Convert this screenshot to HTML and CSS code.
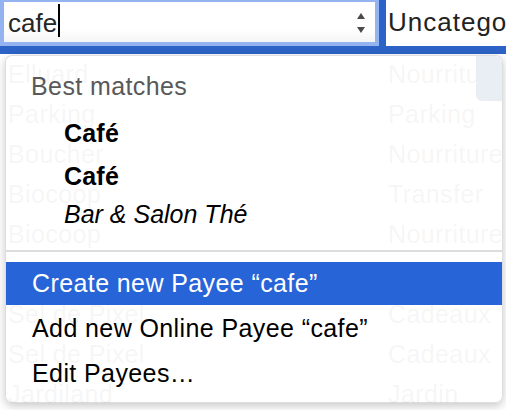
FILE: index.html
```html
<!DOCTYPE html>
<html lang="fr">
<head>
  <meta charset="UTF-8" />
  <meta name="viewport" content="width=device-width, initial-scale=1.0" />
  <title>Payee</title>
  <link rel="stylesheet" href="styles.css">
</head>
<body>
  <div class="table">
    <div class="row row-selected">
      <div class="search-field">
        <span class="search-text">cafe</span><span class="caret"></span>
        <svg class="stepper" width="10" height="22" viewBox="0 0 10 22">
          <polygon points="1,7 9,7 5,1" />
          <polygon points="1,15 9,15 5,21" />
        </svg>
      </div>
      <div class="category-field">Uncategorized</div>
    </div>
    <div class="row"><span class="name">Elluard</span><span class="category">Nourriture</span></div>
    <div class="row"><span class="name">Parking</span><span class="category">Parking</span></div>
    <div class="row"><span class="name">Boucher</span><span class="category">Nourriture</span></div>
    <div class="row"><span class="name">Biocoop</span><span class="category">Transfer</span></div>
    <div class="row"><span class="name">Biocoop</span><span class="category">Nourriture</span></div>
    <div class="row"><span class="name">Sel de Pixel</span><span class="category">Cadeaux</span></div>
    <div class="row"><span class="name">Sel de Pixel</span><span class="category">Cadeaux</span></div>
    <div class="row"><span class="name">Sel de Pixel</span><span class="category">Cadeaux</span></div>
    <div class="row"><span class="name">Jardiland</span><span class="category">Jardin</span></div>
  </div>

  <div class="menu">
    <div class="menu-tab"></div>
    <div class="menu-head">Best matches</div>
    <div class="menu-item match">Café</div>
    <div class="menu-item match">Café</div>
    <div class="menu-item match match-alt">Bar &amp; Salon Thé</div>
    <div class="menu-sep"></div>
    <div class="menu-item active">Create new Payee “cafe”</div>
    <div class="menu-item">Add new Online Payee “cafe”</div>
    <div class="menu-item">Edit Payees…</div>
  </div>
</body>
</html>
```

FILE: styles.css
```css
* { box-sizing: border-box; }
body {
  margin: 0;
  width: 506px; height: 410px;
  overflow: hidden;
  position: relative;
  background: #fff;
  font-family: 'Liberation Sans', Arial, sans-serif;
  font-size: 25px;
  letter-spacing: 0.4px;
  white-space: nowrap;
}

.table { width: 100%; }
.row {
  display: grid;
  grid-template-columns: 386px 1fr;
  height: 40px; line-height: 40px;
  color: #333;
  overflow: hidden;
}
.row .name { padding-left: 8px; overflow: hidden; }
.row .category { padding-left: 2px; overflow: hidden; }

.row-selected {
  display: flex; gap: 7px;
  height: 54px;
  background: #2d63c6;
}
.search-field {
  display: flex; align-items: flex-start;
  width: 379px; height: 48px;
  margin-top: -2px;
  border: 4px solid #93b4f0;
  background: linear-gradient(#fff, #fff 70%, #f4f4f4);
  color: #262626;
}
.search-text {
  font-size: 26px; letter-spacing: 0;
  line-height: 40px; padding-top: 1px; padding-left: 4px;
}
.caret {
  width: 2px; height: 33px;
  margin-top: 2px; margin-left: 1px;
  background: #000;
}
.stepper {
  margin-left: auto; margin-right: 9px; margin-top: 10px;
  fill: #4a4a4a;
}
.category-field {
  flex: 1; height: 46px;
  background: #fff;
  padding-left: 2px;
  font-size: 26px; letter-spacing: 1px;
  line-height: 44px;
  color: #222;
  overflow: hidden;
}

.menu {
  position: absolute; left: 5px; top: 55px;
  width: 498px;
  padding: 9px 0 7px;
  background: rgba(255, 255, 255, 0.955);
  border: 1px solid rgba(0, 0, 0, 0.13);
  border-radius: 7px;
  box-shadow: 0 3px 10px rgba(0, 0, 0, 0.22);
  overflow: hidden;
}
.menu-tab {
  position: absolute; top: 0; right: 0;
  width: 26px; height: 45px;
  background: #e9eef5;
  border-radius: 0 6px 0 6px;
}
.menu-head {
  line-height: 43px; margin-bottom: 4px;
  padding-left: 25px;
  color: #595959;
}
.menu-item {
  height: 43px; line-height: 43px;
  padding-left: 26px;
  color: #000;
  margin-top: 2px;
}
.match { padding-left: 58px; font-weight: bold; letter-spacing: 0.2px; margin-top: 0; }
.match-alt { font-weight: normal; font-style: italic; margin-top: -5px; letter-spacing: 0; }
.menu-sep {
  height: 2px; margin: 14px 0 10px;
  background: #dcdcdc;
}
.menu-item.active {
  margin-top: 0;
  background: #2764d8;
  color: #fff;
}
```
